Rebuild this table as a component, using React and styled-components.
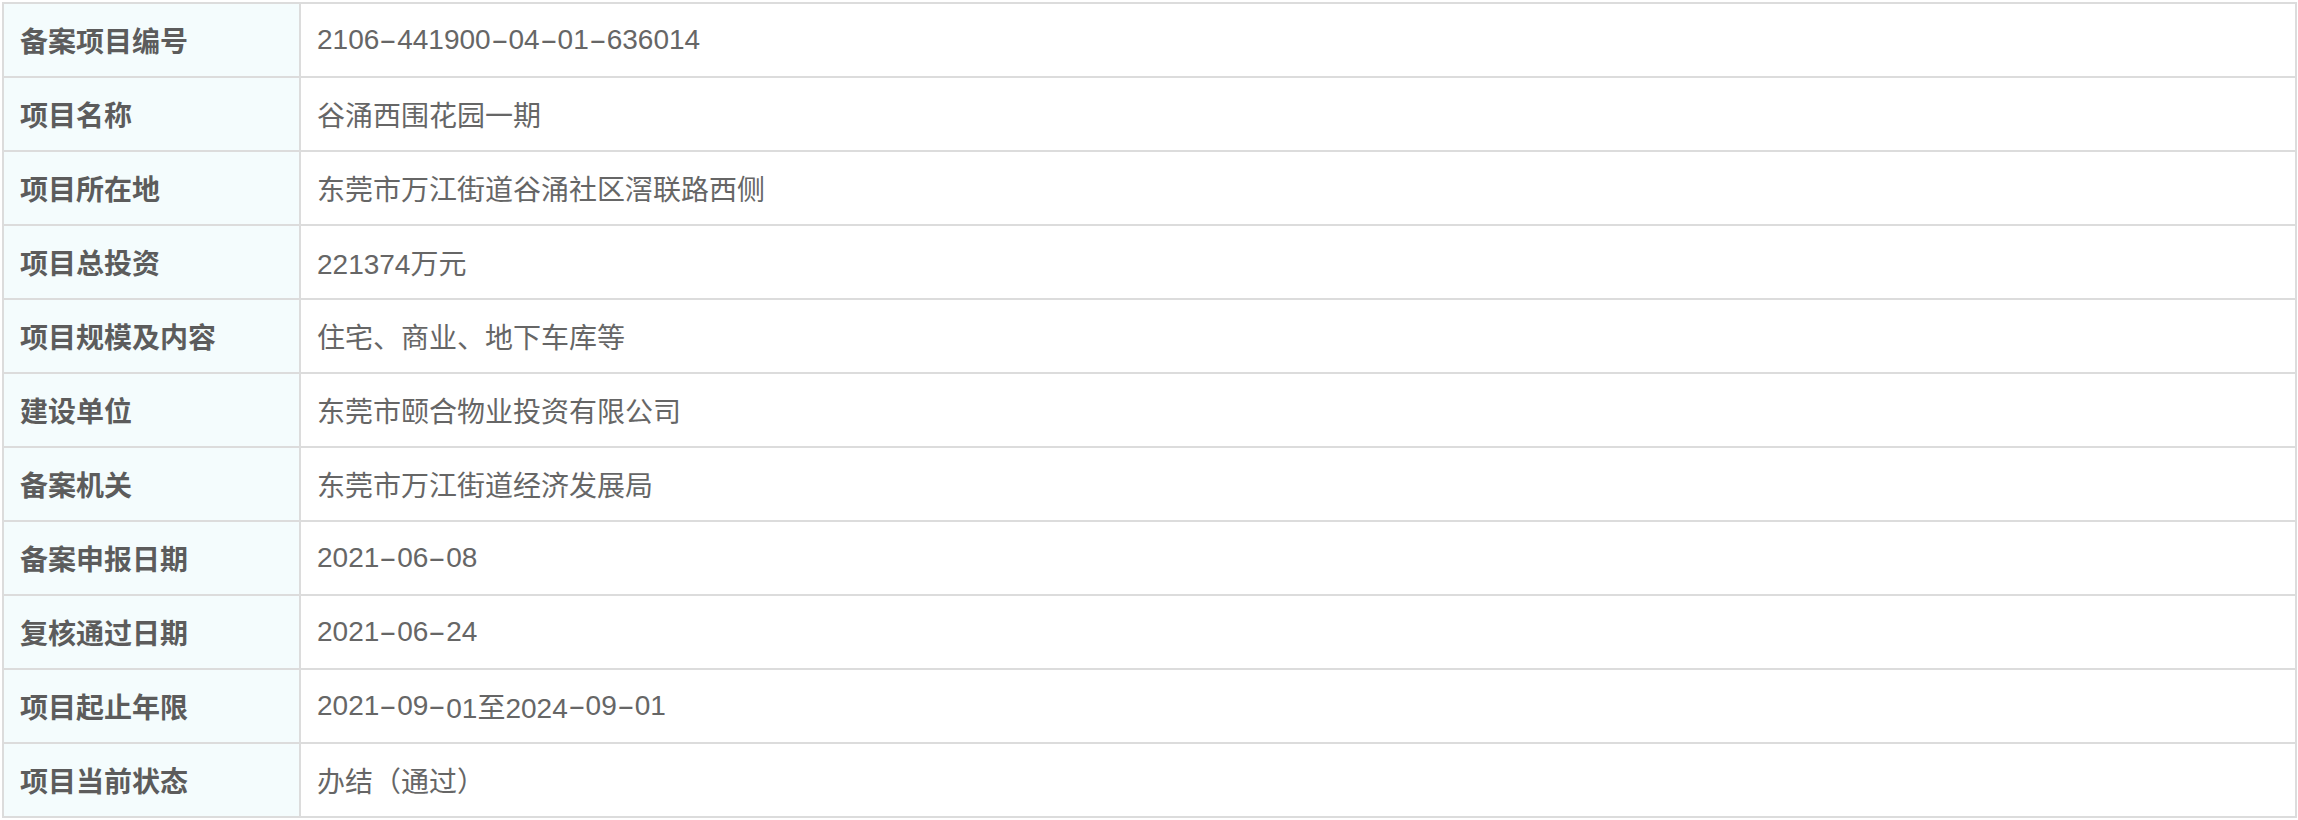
import React from "react";
import styled, { createGlobalStyle } from "styled-components";

const Global = createGlobalStyle`
  html, body { margin: 0; padding: 0; background: #fff; }
  body { font-family: "Liberation Sans", "Noto Sans CJK SC", sans-serif; }
`;

const Page = styled.div`
  padding: 2px 1px 0 2px;
`;

const Grid = styled.div`
  display: grid;
  grid-template-columns: 295px 1fr;
  grid-auto-rows: 72px;
  gap: 2px;
  background: #dcdcdc;
  border: 2px solid #dcdcdc;
`;

const Label = styled.div`
  background: #f4fcfd;
  display: flex;
  align-items: center;
  padding-left: 16px;
  font-size: 28px;
  font-weight: 700;
  color: #5c5c5c;
`;

const Value = styled.div`
  background: #fff;
  display: flex;
  align-items: center;
  padding-left: 16px;
  font-size: 28px;
  font-weight: 400;
  color: #666;
  white-space: pre;
`;

const Dash = styled.span`
  display: inline-block;
  width: 0.64em;
  text-align: center;
  transform: scaleX(1.9);
`;

const rows = [
  ["备案项目编号", "2106-441900-04-01-636014"],
  ["项目名称", "谷涌西围花园一期"],
  ["项目所在地", "东莞市万江街道谷涌社区滘联路西侧"],
  ["项目总投资", "221374万元"],
  ["项目规模及内容", "住宅、商业、地下车库等"],
  ["建设单位", "东莞市颐合物业投资有限公司"],
  ["备案机关", "东莞市万江街道经济发展局"],
  ["备案申报日期", "2021-06-08"],
  ["复核通过日期", "2021-06-24"],
  ["项目起止年限", "2021-09-01至2024-09-01"],
  ["项目当前状态", "办结（通过）"],
];

function renderValue(v) {
  const parts = v.split("-");
  const out = [];
  parts.forEach((p, i) => {
    if (i > 0) out.push(<Dash key={"d" + i}>-</Dash>);
    out.push(<React.Fragment key={"p" + i}>{p}</React.Fragment>);
  });
  return out;
}

export default function App() {
  return (
    <Page>
      <Global />
      <Grid>
        {rows.map(([k, v]) => (
          <React.Fragment key={k}>
            <Label>{k}</Label>
            <Value>{renderValue(v)}</Value>
          </React.Fragment>
        ))}
      </Grid>
    </Page>
  );
}
